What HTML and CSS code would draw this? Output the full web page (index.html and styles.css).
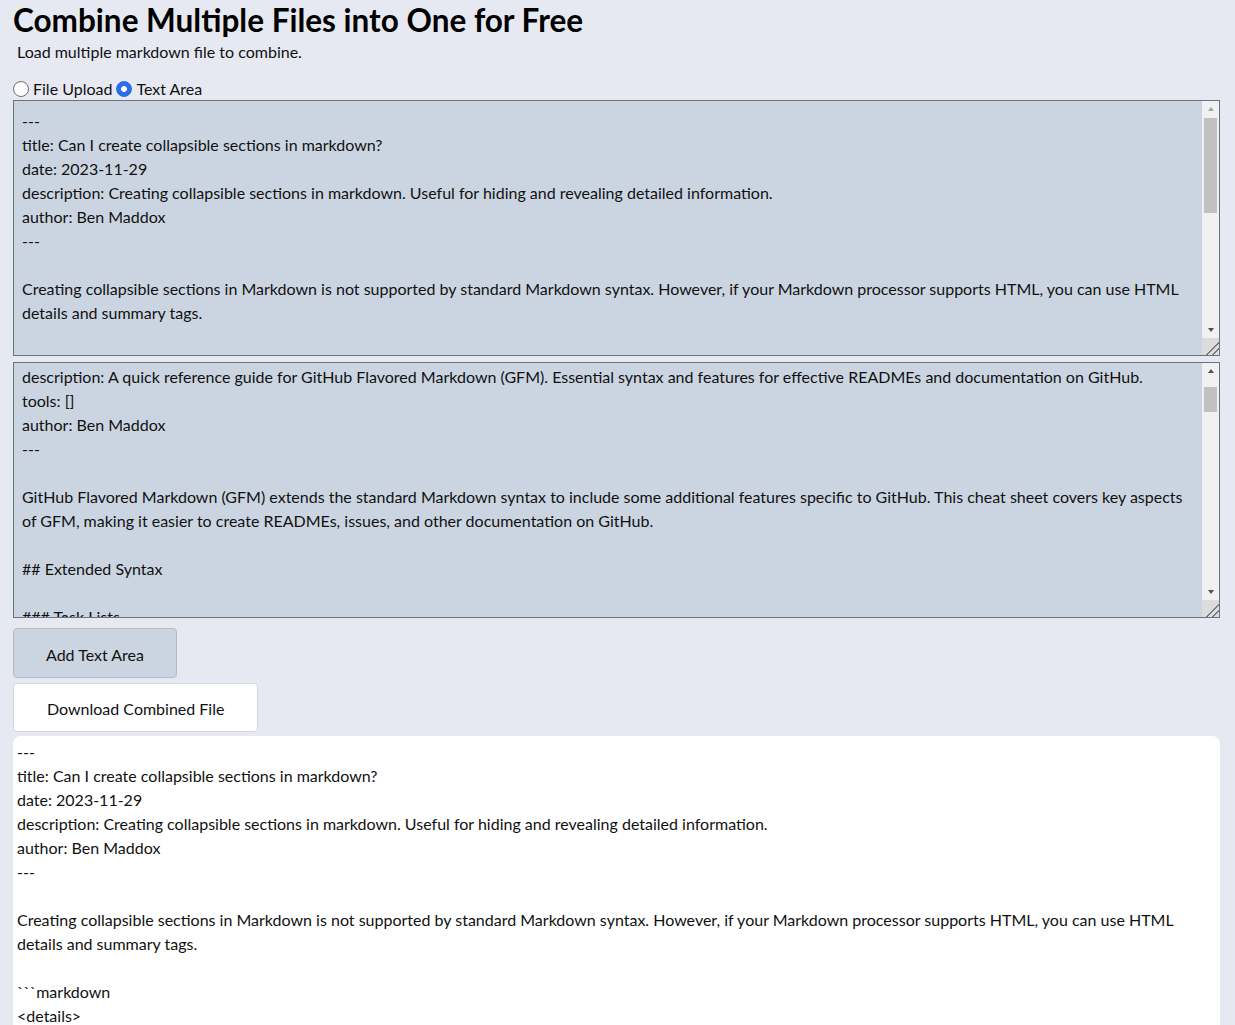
FILE: index.html
```html
<!DOCTYPE html>
<html lang="en">
<head>
<meta charset="utf-8">
<title>Combine Multiple Files into One for Free</title>
<link rel="stylesheet" href="styles.css">
</head>
<body>
<main class="page">
  <h1 class="title">Combine Multiple Files into One for Free</h1>
  <p class="subtitle">Load multiple markdown file to combine.</p>
  <div class="modes">
    <label class="mode"><input type="radio" name="mode"> File Upload</label>
    <label class="mode"><input type="radio" name="mode" checked> Text Area</label>
  </div>
  <div class="areas">
    <div class="area-box">
<textarea class="area">---
title: Can I create collapsible sections in markdown?
date: 2023-11-29
description: Creating collapsible sections in markdown. Useful for hiding and revealing detailed information.
author: Ben Maddox
---

Creating collapsible sections in Markdown is not supported by standard Markdown syntax. However, if your Markdown processor supports HTML, you can use HTML details and summary tags.

&#96;&#96;&#96;markdown
&lt;details&gt;
  &lt;summary&gt;Click to expand!&lt;/summary&gt;

  ## Heading
  1. A numbered
  2. list
     * With some
     * Sub bullets
&lt;/details&gt;
&#96;&#96;&#96;
</textarea>
      <div class="sbar">
        <div class="sb-btn"><span class="tri tri-up tri-off"></span></div>
        <div class="sb-track"><div class="sb-thumb thumb-one"></div></div>
        <div class="sb-btn"><span class="tri tri-down"></span></div>
        <div class="sb-corner"></div>
      </div>
    </div>
    <div class="area-box">
<textarea class="area" id="second-area">---
title: GitHub Flavored Markdown Cheat Sheet
date: 2023-12-05
description: A quick reference guide for GitHub Flavored Markdown (GFM). Essential syntax and features for effective READMEs and documentation on GitHub.
tools: []
author: Ben Maddox
---

GitHub Flavored Markdown (GFM) extends the standard Markdown syntax to include some additional features specific to GitHub. This cheat sheet covers key aspects of GFM, making it easier to create READMEs, issues, and other documentation on GitHub.

## Extended Syntax

### Task Lists

&#96;&#96;&#96;markdown
- [x] Write the press release
- [ ] Update the website
- [ ] Contact the media
&#96;&#96;&#96;

### Tables

&#96;&#96;&#96;markdown
| Syntax    | Description |
| --------- | ----------- |
| Header    | Title       |
| Paragraph | Text        |
&#96;&#96;&#96;

### Strikethrough

&#96;&#96;&#96;markdown
~~The world is flat.~~
&#96;&#96;&#96;

### Fenced Code Blocks with Syntax Highlighting

&#96;&#96;&#96;javascript
function greet(name) {
  console.log("Hello, " + name + "!");
}
&#96;&#96;&#96;

### Autolinked References

- Issues and pull requests: #123
- Commit SHAs: a5c3785ed8d6a35868bc169f07e40e889087fd2e
- Usernames: @octocat

### Emoji

&#96;&#96;&#96;markdown
:smile: :rocket: :tada:
&#96;&#96;&#96;

### Footnotes

&#96;&#96;&#96;markdown
Here is a simple footnote.[^1]

[^1]: My reference.
&#96;&#96;&#96;

### Alerts

&#96;&#96;&#96;markdown
&gt; [!NOTE]
&gt; Useful information that users should know.

&gt; [!TIP]
&gt; Helpful advice for doing things better.

&gt; [!WARNING]
&gt; Urgent info that needs immediate user attention.
&#96;&#96;&#96;

### Collapsed Sections

&#96;&#96;&#96;markdown
&lt;details&gt;
  &lt;summary&gt;Click to expand&lt;/summary&gt;

  Hidden content goes here.
&lt;/details&gt;
&#96;&#96;&#96;

### Mermaid Diagrams

&#96;&#96;&#96;mermaid
graph TD;
    A--&gt;B;
    A--&gt;C;
    B--&gt;D;
    C--&gt;D;
&#96;&#96;&#96;

### Math Expressions

&#96;&#96;&#96;markdown
$\sqrt{3}$
&#96;&#96;&#96;

## Conclusion

GFM makes it easy to write clear, well-structured documentation for your projects on GitHub.
</textarea>
      <div class="sbar">
        <div class="sb-btn"><span class="tri tri-up"></span></div>
        <div class="sb-track"><div class="sb-thumb thumb-two"></div></div>
        <div class="sb-btn"><span class="tri tri-down"></span></div>
        <div class="sb-corner"></div>
      </div>
    </div>
  </div>
  <div class="actions">
    <button class="btn btn-add" type="button">Add Text Area</button>
    <button class="btn btn-download" type="button">Download Combined File</button>
  </div>
<pre class="output">---
title: Can I create collapsible sections in markdown?
date: 2023-11-29
description: Creating collapsible sections in markdown. Useful for hiding and revealing detailed information.
author: Ben Maddox
---

Creating collapsible sections in Markdown is not supported by standard Markdown syntax. However, if your Markdown processor supports HTML, you can use HTML details and summary tags.

&#96;&#96;&#96;markdown
&lt;details&gt;
  &lt;summary&gt;Click to expand!&lt;/summary&gt;

  ## Heading
  1. A numbered
  2. list
     * With some
     * Sub bullets
&lt;/details&gt;
&#96;&#96;&#96;
</pre>
</main>
<script src="script.js"></script>
</body>
</html>
```

FILE: styles.css
```css
html, body {
  margin: 0;
  padding: 0;
  background: #e6e9f1;
}
body {
  font-family: "Lato", "Liberation Sans", sans-serif;
  font-size: 16px;
  color: #111;
}
.page {
  padding: 0 15px 0 13px;
}
.title {
  margin: 0;
  padding-top: 2px;
  font-size: 31.5px;
  line-height: 36px;
  font-weight: 700;
  color: #000;
}
.subtitle {
  margin: 4px 0 0 4px;
  line-height: 20px;
}
.modes {
  margin-top: 17px;
  display: flex;
  gap: 4px;
  line-height: 20px;
}
.mode {
  display: flex;
  align-items: center;
  gap: 4px;
}
.mode input {
  appearance: none;
  -webkit-appearance: none;
  box-sizing: border-box;
  margin: 0;
  width: 16px;
  height: 16px;
  border-radius: 50%;
  border: 1px solid #6e6e6e;
  background: #fff;
}
.mode input:checked {
  border-color: #2b6de5;
  background: radial-gradient(circle, #fff 0 2.6px, #2b6de5 3.2px);
}
.areas {
  margin-top: 1px;
  display: flex;
  flex-direction: column;
  gap: 6px;
}
.area-box {
  display: flex;
  height: 256px;
  box-sizing: border-box;
  background: #cbd5e1;
  border: 1px solid #6b7280;
}
.area {
  flex: 1;
  min-width: 0;
  display: block;
  box-sizing: border-box;
  height: 100%;
  margin: 0;
  padding: 8px;
  background: transparent;
  border: 0;
  outline: none;
  resize: none;
  font-family: inherit;
  font-size: 16px;
  line-height: 24px;
  color: #111;
  overflow: hidden;
}
.sbar {
  width: 17px;
  flex: none;
  display: flex;
  flex-direction: column;
  background: #f1f1f1;
}
.sb-btn {
  height: 17px;
  flex: none;
  display: flex;
  align-items: center;
  justify-content: center;
}
.tri {
  width: 0;
  height: 0;
  border-left: 3.5px solid transparent;
  border-right: 3.5px solid transparent;
}
.tri-up {
  border-bottom: 4px solid #505050;
  margin-top: -1px;
}
.tri-up.tri-off {
  border-bottom-color: #a3a3a3;
}
.tri-down {
  border-top: 4px solid #505050;
}
.sb-track {
  flex: 1;
  padding: 0 2px;
}
.sb-thumb {
  background: #c1c1c1;
}
.thumb-one {
  height: 95px;
}
.thumb-two {
  margin-top: 7px;
  height: 25px;
}
.sb-corner {
  height: 17px;
  flex: none;
  background:
    linear-gradient(135deg, transparent 0 60%, #7a7a7a 60% 65%, transparent 65% 78%, #7a7a7a 78% 83%, transparent 83%),
    #dcdcdc;
}
.actions {
  margin-top: 10px;
  display: flex;
  flex-direction: column;
  align-items: flex-start;
  gap: 5px;
}
.btn {
  font-family: inherit;
  font-size: 16px;
  line-height: 20px;
  color: #111;
  border: 1px solid #b6bcc6;
  border-radius: 4px;
  padding: 16px 32px 12px;
  cursor: pointer;
}
.btn-add {
  background: #cbd5e1;
}
.btn-download {
  background: #fff;
  border-color: #d4d8df;
  padding: 15px 33px 12px;
}
.output {
  margin: 4px 0 0 0;
  padding: 4px 4px 8px 4px;
  background: #fff;
  border-radius: 8px;
  font-family: inherit;
  font-size: 16px;
  line-height: 24px;
  white-space: pre-wrap;
  color: #111;
}
```

FILE: script.js
```js
var second = document.getElementById('second-area');
if (second) {
  second.scrollTop = 78;
}
```
